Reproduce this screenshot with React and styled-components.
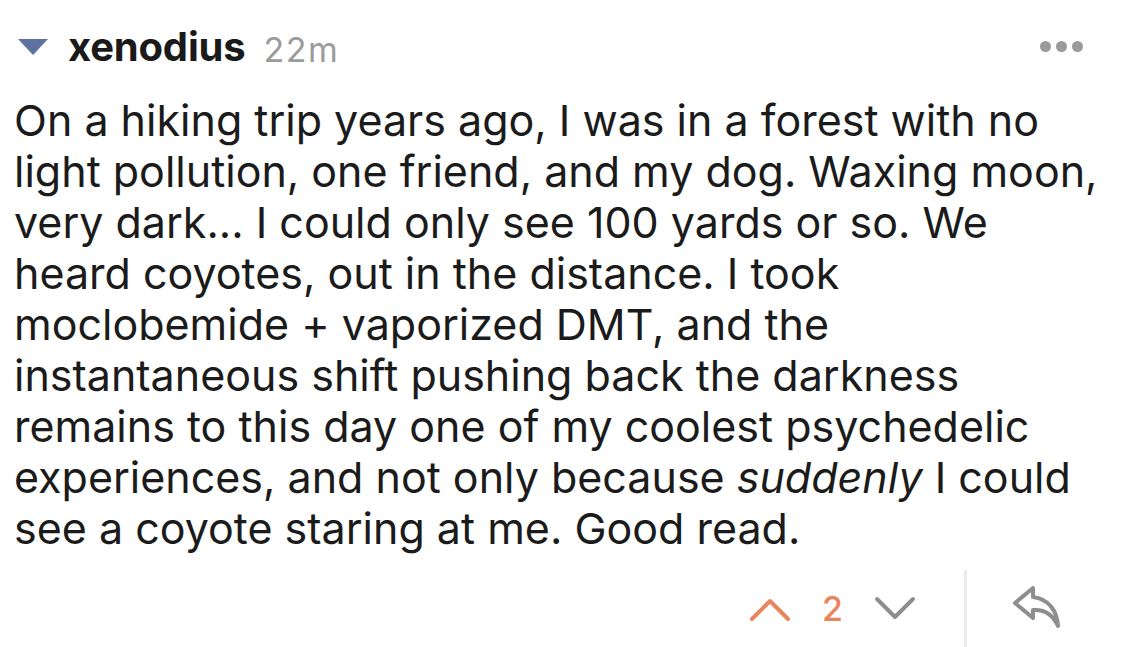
import React from "react";
import styled, { createGlobalStyle } from "styled-components";

const Global = createGlobalStyle`
  html, body { margin: 0; padding: 0; background: #fff; }
  body { font-family: Inter, "Liberation Sans", sans-serif; }
`;

const Comment = styled.div`
  width: 1125px;
  height: 647px;
  box-sizing: border-box;
  padding: 22px 42px 0 14px;
  display: flex;
  flex-direction: column;
  overflow: hidden;
`;

const Header = styled.div`
  display: flex;
  align-items: center;
  height: 48px;
`;

const Collapse = styled.span`
  width: 0;
  height: 0;
  margin: 2px 20px 0 4px;
  border-left: 15px solid transparent;
  border-right: 15px solid transparent;
  border-top: 16px solid #5e71a1;
`;

const Author = styled.span`
  font-size: 40px;
  font-weight: 700;
  color: #1a1a1a;
  letter-spacing: -0.2px;
`;

const Time = styled.span`
  font-size: 34px;
  color: #9b9b9b;
  letter-spacing: 1.5px;
  margin: 6px 0 0 18px;
`;

const Dots = styled.div`
  margin-left: auto;
  display: flex;
  gap: 5px;
  & span {
    width: 11px;
    height: 11px;
    border-radius: 50%;
    background: #9a9a9a;
  }
`;

const Body = styled.div`
  margin-top: 25px;
  font-size: 43px;
  line-height: 51px;
  color: #1b1b1b;
  & em { font-style: italic; }
`;

const Line = styled.div`
  white-space: nowrap;
`;

const Footer = styled.div`
  margin-top: auto;
  display: flex;
  justify-content: flex-end;
  align-items: center;
  height: 77px;
`;

const Votes = styled.div`
  display: flex;
  align-items: center;
  gap: 30px;
  padding-right: 47px;
`;

const Score = styled.span`
  font-size: 34px;
  font-weight: 500;
  color: ${(p) => p.color};
`;

const Divider = styled.div`
  align-self: stretch;
  width: 3px;
  background: #ebebeb;
`;

const Reply = styled.div`
  padding: 0 20px 4px 44px;
  display: flex;
`;

const Chevron = ({ up, color }) => (
  <svg width="44" height="28" viewBox="0 0 44 28">
    <path
      d={up ? "M4 24 L22 6 L40 24" : "M4 4 L22 22 L40 4"}
      fill="none"
      stroke={color}
      strokeWidth="4"
      strokeLinecap="round"
      strokeLinejoin="round"
    />
  </svg>
);

const lines = [
  "On a hiking trip years ago, I was in a forest with no",
  "light pollution, one friend, and my dog. Waxing moon,",
  "very dark... I could only see 100 yards or so. We",
  "heard coyotes, out in the distance. I took",
  "moclobemide + vaporized DMT, and the",
  "instantaneous shift pushing back the darkness",
  "remains to this day one of my coolest psychedelic",
];

export default function App() {
  return (
    <>
      <Global />
      <Comment>
        <Header>
          <Collapse />
          <Author>xenodius</Author>
          <Time>22m</Time>
          <Dots>
            <span />
            <span />
            <span />
          </Dots>
        </Header>
        <Body>
          {lines.map((l) => (
            <Line key={l}>{l}</Line>
          ))}
          <Line>
            experiences, and not only because <em>suddenly</em> I could
          </Line>
          <Line>see a coyote staring at me. Good read.</Line>
        </Body>
        <Footer>
          <Votes>
            <Chevron up color="#e9845d" />
            <Score color="#e9845d">2</Score>
            <Chevron color="#8e8e8e" />
          </Votes>
          <Divider />
          <Reply>
            <svg width="52" height="46" viewBox="0 0 52 46">
              <path
                d="M22 4 L4 19 L22 34 L22 26 C34 25 42 31 47 42 C46 27 38 15 22 13 Z"
                fill="none"
                stroke="#8e8e8e"
                strokeWidth="4"
                strokeLinejoin="round"
              />
            </svg>
          </Reply>
        </Footer>
      </Comment>
    </>
  );
}
